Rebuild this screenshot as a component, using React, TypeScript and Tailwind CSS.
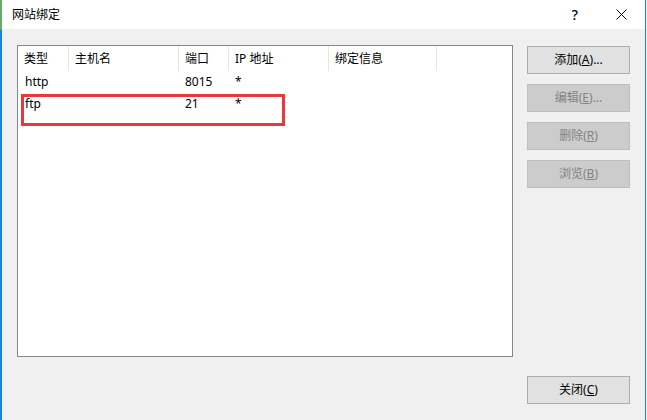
import React from 'react';

const font = { fontFamily: '"Noto Sans", "Noto Sans CJK SC", sans-serif' };

const columns = ['类型', '主机名', '端口', 'IP 地址', '绑定信息'];

const rows = [
  { type: 'http', host: '', port: '8015', ip: '*', info: '' },
  { type: 'ftp', host: '', port: '21', ip: '*', info: '' },
];

function DialogButton({ label, keyChar, suffix = '', disabled = false }: { label: string; keyChar: string; suffix?: string; disabled?: boolean }) {
  return (
    <div
      className={
        disabled
          ? 'h-[28px] w-[103px] flex items-center justify-center border border-[#bfbfbf] bg-[#cccccc] text-[#838383] text-[12px]'
          : 'h-[28px] w-[103px] flex items-center justify-center border border-[#adadad] bg-[#e1e1e1] text-black text-[12px]'
      }
    >
      {label}(<u>{keyChar}</u>){suffix}
    </div>
  );
}

export default function App() {
  return (
    <div className="relative w-[647px] h-[420px] flex bg-[#f0f0f0] overflow-hidden" style={font}>
      {/* left window edge */}
      <div className="w-[2px] flex flex-col">
        <div className="h-[30px] bg-[#6aa86e]" />
        <div className="flex-1 bg-[#1883d7]" />
      </div>

      <div className="flex-1 flex flex-col">
        {/* title bar */}
        <div className="h-[29px] bg-white flex items-center">
          <span className="ml-[10px] text-[12px] text-black">网站绑定</span>
          <span className="ml-auto text-[14px] text-black font-medium mr-[38px]">?</span>
          <svg width="11" height="11" viewBox="0 0 11 11" className="mr-[18px]">
            <path d="M0.5 0.5 L10.5 10.5 M10.5 0.5 L0.5 10.5" stroke="#000" strokeWidth="1" />
          </svg>
        </div>

        {/* body */}
        <div className="flex-1 flex">
          {/* bindings list */}
          <div className="ml-[15px] mt-[16px] w-[496px] h-[312px] border border-[#828790] bg-white">
            <div className="grid grid-cols-[51px_110px_50px_100px_108px_1fr] h-[25px]">
              {columns.map((c) => (
                <div key={c} className="border-r border-[#e5e5e5] pl-[6px] flex items-center text-[12px] text-black">
                  {c}
                </div>
              ))}
              <div />
            </div>
            {rows.map((r) => (
              <div key={r.type} className="grid grid-cols-[51px_110px_50px_100px_108px_1fr] h-[22px] text-[12px] text-black">
                <div className="pl-[7px] flex items-center">{r.type}</div>
                <div className="pl-[6px] flex items-center">{r.host}</div>
                <div className="pl-[6px] flex items-center">{r.port}</div>
                <div className="pl-[6px] flex items-center">{r.ip}</div>
                <div className="pl-[6px] flex items-center">{r.info}</div>
                <div />
              </div>
            ))}
          </div>

          {/* buttons */}
          <div className="ml-[14px] mt-[17px] mb-[16px] flex flex-col gap-[10px]">
            <DialogButton label="添加" keyChar="A" suffix="..." />
            <DialogButton label="编辑" keyChar="E" suffix="..." disabled />
            <DialogButton label="删除" keyChar="R" disabled />
            <DialogButton label="浏览" keyChar="B" disabled />
            <div className="mt-auto">
              <DialogButton label="关闭" keyChar="C" />
            </div>
          </div>
        </div>
      </div>

      {/* right window edge */}
      <div className="w-px bg-[#1883d7]" />
      <div className="w-px bg-[#f0f0f0]" />

      {/* red annotation box */}
      <div className="absolute left-[21px] top-[94px] w-[264px] h-[32px] border-[3px] border-[#e8383d]" />
    </div>
  );
}
